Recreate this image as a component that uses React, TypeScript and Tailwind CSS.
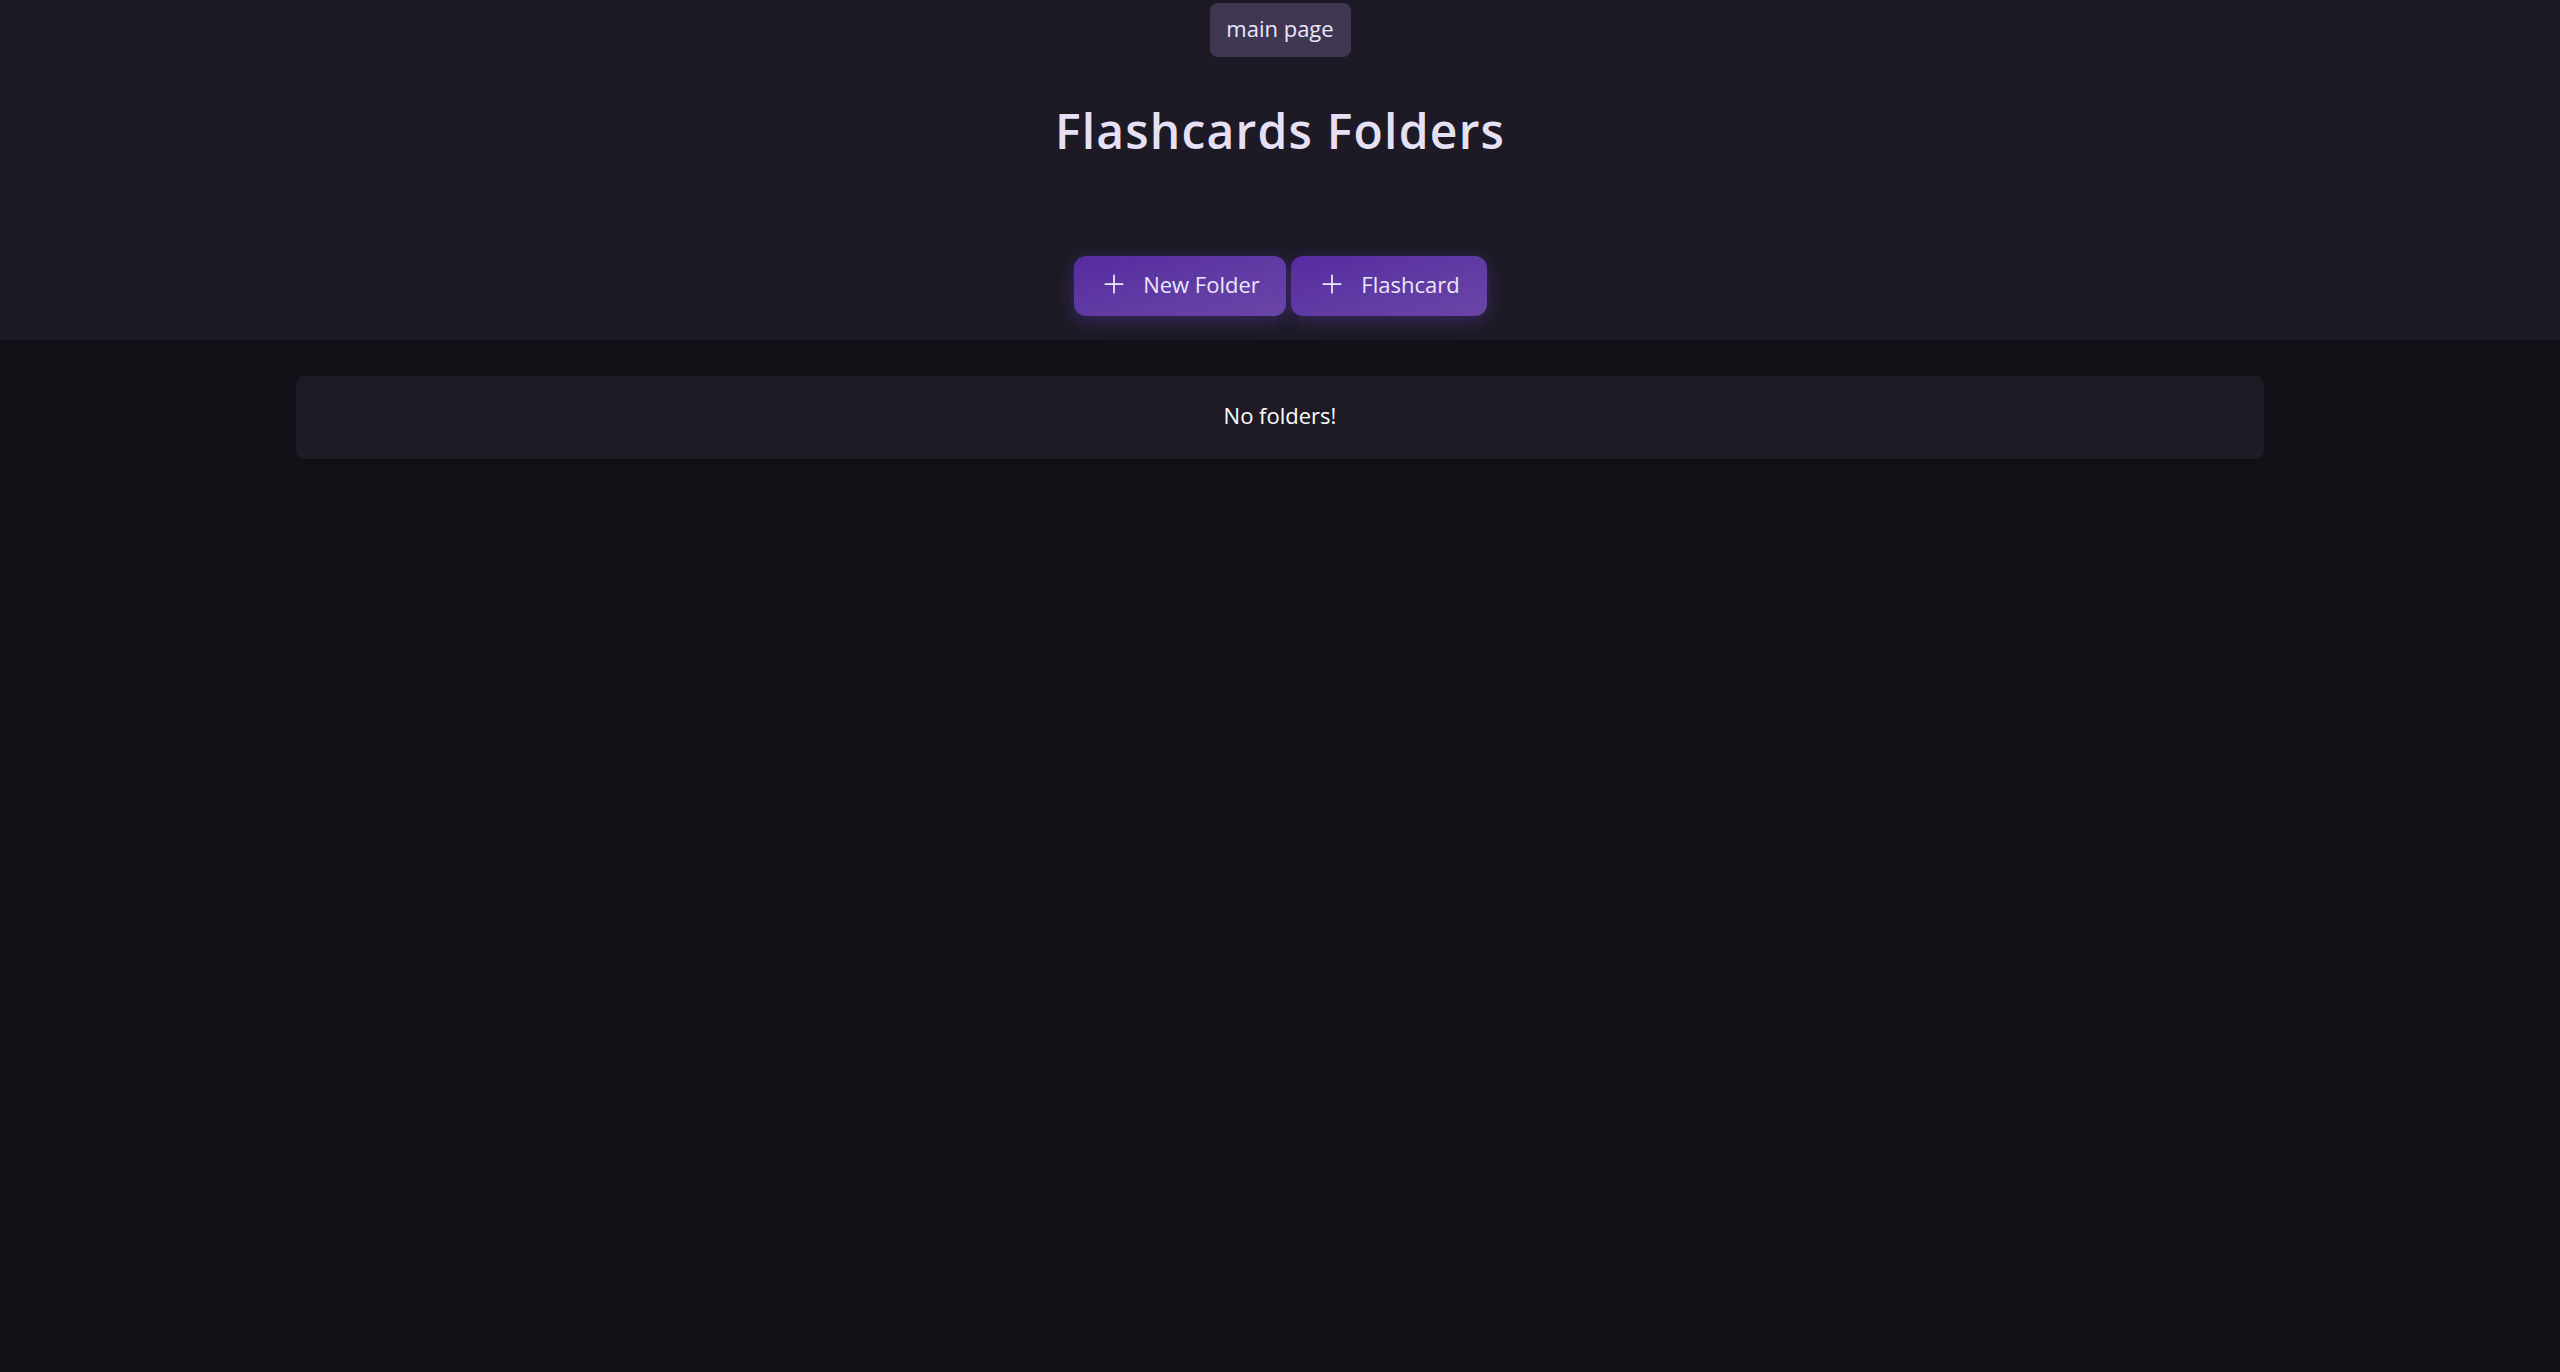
import { Plus } from "lucide-react";

const ActionButton: React.FC<{ label: string; width: string }> = ({ label, width }) => {
  return (
    <button
      className={`flex h-[60px] ${width} items-center justify-center gap-[14px] rounded-xl bg-gradient-to-br from-[#552ca0] to-[#6a46a6] pb-1 text-[22px] text-[#ece6ff] shadow-[0_4px_16px_rgba(110,70,200,0.35)]`}
    >
      <Plus size={30} strokeWidth={1.4} />
      <span>{label}</span>
    </button>
  );
};

export default function App() {
  return (
    <div
      className="min-h-screen bg-[#111016] text-[#ece6ff]"
      style={{ fontFamily: '"Open Sans", "Noto Sans", sans-serif' }}
    >
      <header className="flex h-[340px] flex-col items-center bg-[#1d1a26]">
        <button className="mt-[3px] flex h-[54px] w-[141px] items-center justify-center rounded-lg bg-[#3f3752] pb-1 text-[22px] text-[#ece6ff]">
          main page
        </button>
        <h1 className="mt-[50px] text-[48px] font-semibold leading-none tracking-wide text-[#e6e0f7]">
          Flashcards Folders
        </h1>
        <div className="mt-[101px] flex gap-[5px]">
          <ActionButton label="New Folder" width="w-[212px]" />
          <ActionButton label="Flashcard" width="w-[196px]" />
        </div>
      </header>
      <main className="pt-9">
        <div className="mx-auto flex h-[83px] w-[1968px] items-center justify-center rounded-lg bg-[#1e1b26] pb-1 text-[22px] text-white">
          No folders!
        </div>
      </main>
    </div>
  );
}
